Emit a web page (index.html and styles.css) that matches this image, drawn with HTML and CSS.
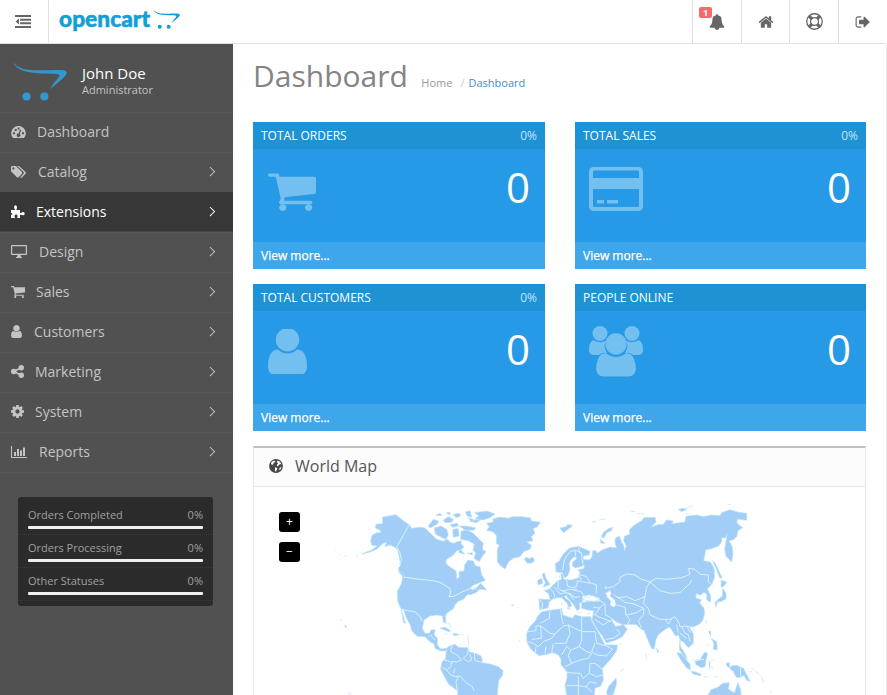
FILE: index.html
```html
<!DOCTYPE html>
<html lang="en">
<head>
<meta charset="utf-8">
<title>Dashboard</title>
<link rel="stylesheet" href="styles.css">
</head>
<body>
<svg class="defs" width="0" height="0" aria-hidden="true">
  <symbol id="cart" viewBox="64 128 1664 1536"><path d="M704 1536q0 52-38 90t-90 38-90-38-38-90 38-90 90-38 90 38 38 90zm896 0q0 52-38 90t-90 38-90-38-38-90 38-90 90-38 90 38 38 90zm128-1088v512q0 24-16.500 42.500t-40.500 21.500l-1044 122q13 60 13 70 0 16-24 64h920q26 0 45 19t19 45-19 45-45 19h-1024q-26 0-45-19t-19-45q0-11 8-31.500t16-36 21.500-40 15.500-29.500l-177-823h-204q-26 0-45-19t-19-45 19-45 45-19h256q16 0 28.500 6.500t19.500 15.500 13 24.500 8 26 5.500 29.500 4.500 26h1201q26 0 45 19t19 45z"/></symbol>
  <symbol id="user" viewBox="256 128 1280 1536"><path d="M1536 1399q0 109-62.500 187t-150.500 78h-854q-88 0-150.500-78t-62.500-187q0-85 8.500-160.500t31.500-152 58.500-131 94-89 134.500-34.500q131 128 313 128t313-128q76 0 134.500 34.500t94 89 58.500 131 31.500 152 8.500 160.500zm-256-887q0 159-112.500 271.500t-271.500 112.500-271.500-112.500-112.500-271.500 112.500-271.500 271.500-112.500 271.500 112.500 112.500 271.500z"/></symbol>
  <symbol id="swoosh" viewBox="0 0 54 39"><path d="M0 0C5 7 13 8 24 8.300C35 8.600 45 7.500 51 8.300C54 9 54.500 11 52.500 13.500C49 18 43 22 37 27C42 19 46 16 46.500 13.500C47 11.500 40 12 30 11.500C13 11 3 8 0 0Z"/><circle cx="13.500" cy="34.500" r="4.100"/><circle cx="31.300" cy="34.500" r="4.100"/></symbol>
</svg>

<header class="topbar">
  <a class="toggle"><svg width="16" height="13" viewBox="0 0 16 13"><path d="M0 0h16v2H0zM5 3.700h11v2H5zM5 7.300h11v2H5zM0 11h16v2H0zM4 3.500v6L.5 6.500z"/></svg></a>
  <a class="brand"><svg width="124" height="36" viewBox="0 -3 124 36"><text x="0" y="19.500" textLength="91" lengthAdjust="spacingAndGlyphs">opencart</text><use href="#swoosh" x="94" y="2.500" width="27" height="19.500"/></svg></a>
  <nav class="tools">
    <a class="alerts"><svg width="16" height="16" viewBox="64 0 1664 1792"><path d="M1728 1408q0 52-38 90t-90 38h-448q0 106-75 181t-181 75-181-75-75-181h-448q-52 0-90-38t-38-90q50-42 91-88t85-119.500 74.500-158.500 50-206 19.500-260q0-152 117-282.500t307-158.500q-8-19-8-39 0-40 28-68t68-28 68 28 28 68q0 20-8 39 190 28 307 158.500t117 282.500q0 139 19.500 260t50 206 74.500 158.500 85 119.500 91 88z"/></svg><span class="badge">1</span></a>
    <a><svg width="16" height="16" viewBox="0 0 1792 1792"><path d="M1472 992v480q0 26-19 45t-45 19h-384v-384h-256v384h-384q-26 0-45-19t-19-45v-480q0-1 .5-3t.5-3l575-474 575 474q1 2 1 6zm223-69l-62 74q-8 9-21 11h-3q-13 0-21-7l-692-577-692 577q-12 8-24 7-13-2-21-11l-62-74q-8-10-7-23.500t11-21.500l719-599q32-26 76-26t76 26l244 204v-195q0-14 9-23t23-9h192q14 0 23 9t9 23v408l219 182q10 8 11 21.500t-7 23.500z"/></svg></a>
    <a><svg class="ring" width="17" height="17" viewBox="0 0 16 16"><circle cx="8" cy="8" r="7.300"/><circle cx="8" cy="8" r="3.700"/><path d="M3 3l2.500 2.500M13 3l-2.500 2.500M3 13l2.500-2.500M13 13l-2.500-2.500"/></svg></a>
    <a><svg width="16" height="16" viewBox="0 0 1792 1792"><path d="M704 1440q0 4 1 20t.5 26.500-3 23.500-10 19.500-20.500 6.500h-320q-119 0-203.500-84.500t-84.500-203.500v-704q0-119 84.500-203.500t203.500-84.500h320q13 0 22.500 9.500t9.500 22.500q0 4 1 20t.5 26.500-3 23.500-10 19.500-20.500 6.500h-320q-66 0-113 47t-47 113v704q0 66 47 113t113 47h312l11.500 1 11.500 3 8 5.500 7 9 2 13.500zm928-544q0 26-19 45l-544 544q-19 19-45 19t-45-19-19-45v-288h-448q-26 0-45-19t-19-45v-384q0-26 19-45t45-19h448v-288q0-26 19-45t45-19 45 19l544 544q19 19 19 45z"/></svg></a>
  </nav>
</header>

<div class="layout">
  <aside class="sidebar">
    <div class="profile">
      <svg width="54" height="39"><use href="#swoosh" width="54" height="39"/></svg>
      <div><h4>John Doe</h4><small>Administrator</small></div>
    </div>
    <ul class="menu">
      <li><svg width="15" height="12" viewBox="0 0 15 12"><path fill-rule="evenodd" d="M2 12A7.300 7.300 0 1 1 13 12ZM2 6.300h2v2H2zM3.700 3h2v2h-2zM6.700 1.600h1.800v1.800H6.700zM11 6.300h2v2h-2zM9 3.500 7.700 7.500A1.800 1.800 0 1 0 8.800 8L10.300 4z"/></svg><span class="g11">Dashboard</span></li>
      <li class="sub"><svg width="15" height="12" viewBox="0 0 15 12"><path fill-rule="evenodd" d="M0 1Q0 0 1 0H5L11 6Q11.700 7 11 7.700L7.700 11.300Q6.800 12 6 11.300L0 5.300ZM2.300 1.300A1.100 1.100 0 1 0 2.400 1.300Z"/><path d="M6.300 0H8L14.500 6Q15.300 7 14.500 7.700L11 11.500Q10.200 12.200 9.300 11.500L12.700 7.600Q13.300 6.700 12.500 6Z"/></svg><span class="g12">Catalog</span></li>
      <li class="sub active"><svg width="14" height="13" viewBox="0 0 14 13"><path d="M0 5H4.200Q2.600 3 3.300 1.300Q4.500-.7 5.800 1.300Q6.400 3 5.200 5H9V8Q10.500 8 11.500 7Q14 6.700 13.700 9.300Q12.700 11 11 10Q10 9.500 9 10V13H6Q7.300 10.500 5.800 9.700Q4.200 9.300 3.600 10.400Q3.200 11.500 4.200 13H0V10L2 9L0 8Z"/></svg><span class="g11">Extensions</span></li>
      <li class="sub"><svg width="16" height="13" viewBox="0 0 16 13"><path fill-rule="evenodd" d="M1 0H15Q16 0 16 1V9Q16 10 15 10H9.500L10 12H11V13H5V12H6L6.500 10H1Q0 10 0 9V1Q0 0 1 0ZM1.200 1.200V8.700H14.800V1.200Z"/></svg><span class="g12">Design</span></li>
      <li class="sub"><svg width="14" height="13"><use href="#cart"/></svg><span class="g11">Sales</span></li>
      <li class="sub"><svg width="11" height="13"><use href="#user"/></svg><span class="g12">Customers</span></li>
      <li class="sub"><svg width="13" height="13" viewBox="0 0 12 12"><path d="M2.500 6 9.500 2.500M2.500 6 9.500 9.500" stroke="currentColor" stroke-width="1.600"/><circle cx="2.500" cy="6" r="2.500"/><circle cx="9.500" cy="2.500" r="2.500"/><circle cx="9.500" cy="9.500" r="2.500"/></svg><span class="g11">Marketing</span></li>
      <li class="sub"><svg width="13" height="13" viewBox="128 128 1536 1536"><path d="M1152 896q0-106-75-181t-181-75-181 75-75 181 75 181 181 75 181-75 75-181zm512-109v222q0 12-8 23t-20 13l-185 28q-19 54-39 91 35 50 107 138 10 12 10 25t-9 23q-27 37-99 108t-94 71q-12 0-26-9l-138-108q-44 23-91 38-16 136-29 186-7 28-36 28h-222q-14 0-24.500-8.500t-11.500-21.500l-28-184q-49-16-90-37l-141 107q-10 9-25 9-14 0-25-11-126-114-165-168-7-10-7-23 0-12 8-23 15-21 51-66.500t54-70.500q-27-50-41-99l-183-27q-13-2-21-12.500t-8-23.500v-222q0-12 8-23t19-13l186-28q14-46 39-92-40-57-107-138-10-12-10-24 0-10 9-23 26-36 98.500-107.500t94.500-71.500q13 0 26 10l138 107q44-23 91-38 16-136 29-186 7-28 36-28h222q14 0 24.500 8.500t11.500 21.500l28 184q49 16 90 37l142-107q9-9 24-9 13 0 25 10 129 119 165 170 7 8 7 22 0 12-8 23-15 21-51 66.500t-54 70.500q26 50 41 98l183 28q13 2 21 12.500t8 23.500z"/></svg><span class="g11">System</span></li>
      <li class="sub"><svg width="16" height="12" viewBox="0 0 16 12"><path d="M0 0h1v11h15v1H0zM3 6h2v4H3zM6 3h2v7H6zM9 4.500h2V10H9zM12 1.500h2V10h-2z"/></svg><span class="g12">Reports</span></li>
    </ul>
    <ul class="stats">
      <li><div><span>Orders Completed</span><span>0%</span></div><i></i></li>
      <li><div><span>Orders Processing</span><span>0%</span></div><i></i></li>
      <li><div><span>Other Statuses</span><span>0%</span></div><i></i></li>
    </ul>
  </aside>

  <main class="content">
    <div class="page-head">
      <h1>Dashboard</h1>
      <ul class="crumbs"><li>Home</li><li class="here">Dashboard</li></ul>
    </div>
    <section class="tiles">
      <article class="tile">
        <header><span>TOTAL ORDERS</span><b>0%</b></header>
        <div class="tile-body"><svg class="big-cart" width="48" height="41" viewBox="64 128 1664 1536" preserveAspectRatio="none"><use href="#cart" x="64" y="128" width="1664" height="1536"/></svg><h2>0</h2></div>
        <footer>View more...</footer>
      </article>
      <article class="tile">
        <header><span>TOTAL SALES</span><b>0%</b></header>
        <div class="tile-body"><svg width="54" height="44" viewBox="0 0 54 44"><path fill-rule="evenodd" d="M5 0H49Q54 0 54 5V39Q54 44 49 44H5Q0 44 0 39V5Q0 0 5 0ZM5 3.500Q4 3.500 4 5V11H50V5Q50 3.500 49 3.500ZM4 22V39Q4 40 5 40H49Q50 40 50 39V22ZM8 33H15V36.500H8ZM18 33H29V36.500H18Z"/></svg><h2>0</h2></div>
        <footer>View more...</footer>
      </article>
      <article class="tile">
        <header><span>TOTAL CUSTOMERS</span><b>0%</b></header>
        <div class="tile-body"><svg width="39" height="45" viewBox="0 0 39 45"><use href="#user" y="-1" width="39" height="47"/></svg><h2>0</h2></div>
        <footer>View more...</footer>
      </article>
      <article class="tile">
        <header><span>PEOPLE ONLINE</span></header>
        <div class="tile-body people"><svg width="54" height="51" viewBox="0 0 54 51"><circle cx="11" cy="7.500" r="7.500"/><circle cx="43" cy="7.500" r="7.500"/><circle cx="27" cy="18" r="10.700"/><path d="M4 14Q11 18 17 14.500Q14 21 18 27Q13 26 10 29H5Q0 29 0 24Q0 16 4 14ZM50 14Q43 18 37 14.500Q40 21 36 27Q41 26 44 29H49Q54 29 54 24Q54 16 50 14ZM17 27Q27 35 37 27Q43 27 45 33Q47 38 47 43Q46 50.500 39 50.500H15Q8 50.500 7 43Q7 38 9 33Q11 27 17 27Z"/></svg><h2>0</h2></div>
        <footer>View more...</footer>
      </article>
    </section>

    <section class="panel">
      <h3><svg width="14" height="14" viewBox="0 0 14 14"><circle cx="7" cy="7" r="6.900"/><path fill="#fcfcfc" d="M2.500 3 4.500 1.700 6.500 2 5.600 3.200 4.500 4.600 3.500 5.200 4.500 6.300 2.800 5.800 2 4.500ZM8.500 1.500 11 2.800 12.500 5.500 11 5 9.800 6.200 8.200 7.400 7.800 5.800 9.300 4.600 7.800 3.400ZM6 8.200 8.500 9.200 7.600 11.200 6.800 12.700 5.900 11.500ZM10.800 8.500 12.500 8 11 11.200 10.200 10.600Z"/></svg><span>World Map</span></h3>
      <div class="map">
        <svg width="611" height="208" viewBox="254 487 611 208">
          <g transform="translate(330 500) scale(.33333)">
            <g class="land">
              <path d="M157 52 170 49 198 44 220 62 238 74 245 85 270 82 285 84 293 92 310 108 318 117 340 124 352 118 360 127 372 130 380 125 395 123 393 132 402 140 395 148 380 152 370 165 350 178 347 188 355 197 378 213 381 238 388 232 387 215 402 213 404 195 414 180 430 183 436 197 450 200 455 225 466 241 448 248 430 256 420 265 428 270 440 262 448 268 440 277 422 284 412 284 400 298 385 304 375 314 370 326 350 340 346 350 348 370 340 366 338 348 320 345 300 348 282 360 277 385 285 400 298 400 303 390 316 389 312 404 322 415 322 435 332 447 348 445 352 452 332 453 315 445 312 432 300 425 285 410 262 409 246 394 241 375 228 352 222 332 212 325 203 302 202 274 215 250 218 228 207 217 206 203 212 196 208 170 203 150 195 142 180 135 165 140 170 126 158 131 140 148 120 156 95 162 125 150 142 138 126 136 122 124 126 106 140 98 152 98 150 90 136 84 138 73 158 71Z"/>
              <path d="M213 327 227 370 221 368ZM206 210 225 228 222 235ZM436 268 452 250 470 270 452 268Z"/>
              <path d="M295 78 310 58 325 63 322 72 300 84ZM312 84 332 78 350 88 355 105 347 118 325 107 317 103ZM318 46 330 40 337 47ZM348 38 360 37 360 45ZM340 60 355 50 370 58 365 67 345 68ZM370 43 388 40 392 48 378 53ZM368 88 385 86 387 108 370 112ZM393 94 410 89 430 100 446 116 460 130 457 148 468 155 455 172 448 185 432 175 437 158 429 151 433 132 415 122 392 118ZM385 157 392 148 404 163ZM406 36 420 32 425 52 412 48ZM388 78 413 79 438 84 430 91 405 90ZM433 38 470 33 495 42 482 52 460 60 435 58 447 47ZM420 64 440 59 450 62 438 68ZM412 160 427 158 427 165ZM360 74 383 70 385 78 368 82ZM415 53 432 59 425 67Z"/>
              <path d="M470 70 490 66 488 57 510 51 535 55 548 50 575 50 600 53 605 63 632 67 622 80 609 86 615 100 604 110 609 122 590 126 604 136 600 148 582 154 570 170 550 175 536 185 525 207 512 198 502 185 502 148 508 136 499 130 500 108 490 96 470 91 478 80Z"/>
              <path d="M583 178 588 172 598 176 608 172 614 180 608 188 592 190ZM330 384 345 382 362 392 358 396ZM370 400 386 402 385 406 370 406ZM346 366 352 374M356 368 362 382M345 400 352 402M45 376 50 380 46 384ZM30 361 35 362M15 149 18 150M28 164 32 165M40 168 52 169M78 166 84 165M115 82 121 90M545 316 553 316M563 322 567 325M592 366 597 366M565 418 570 425M52 578 64 584M414 405 416 435M392 404 400 405"/>
              <path d="M350 445 358 438 375 433 385 442 415 443 418 456 435 460 452 467 457 478 455 488 480 492 505 500 519 512 518 525 506 542 503 570 500 620 385 620 383 573 355 551 332 508 336 485 346 478Z"/>
            </g>
            <path class="line" d="M238 74 200 141 210 158 214 180 208 195M222 231 260 237 310 242 330 247 345 256 360 266 362 280 357 290 372 289 390 279 415 268 422 262 438 265M212 327 232 332 255 335 270 350 277 364M295 412 302 405 315 420M366 437 362 455 380 464 395 480 380 486 365 485 362 500 350 510 338 503M415 443 413 462 400 475 415 485 425 480 420 463M433 460 435 482 452 486M350 510 362 525 378 530 390 528 408 548 425 558 433 573M385 530 378 545 382 572M345 480 362 486M375 505 370 520"/>
          </g>
          <g transform="translate(500 500) scale(.33333)">
            <g class="land">
              <path d="M117 297 150 299 146 281 133 272 148 267 165 250 176 241 185 238 182 222 188 222 191 238 215 240 237 233 240 215 233 210 250 206 254 198 247 192 249 178 268 180 276 170 278 152 288 152 291 160 308 149 330 141 350 144 345 128 346 115 358 108 364 125 372 138 373 152 379 138 371 122 374 108 390 103 388 90 402 76 425 62 432 53 466 52 468 67 452 82 474 74 490 73 500 60 520 63 515 71 555 66 558 49 590 45 610 50 635 45 660 47 665 38 690 29 715 37 740 40 740 61 712 57 711 70 728 83 714 92 710 110 700 119 687 122 697 142 699 163 695 186 678 169 674 148 677 131 681 101 676 114 664 113 666 124 657 137 640 144 617 150 611 182 630 186 637 195 643 210 643 234 635 254 622 267 632 288 632 306 621 301 620 282 612 277 602 286 589 281 587 294 604 299 599 309 612 325 614 340 609 359 600 371 582 380 568 381 580 402 580 430 565 443 551 427 540 420 541 439 556 463 562 479 550 468 538 448 540 420 536 405 526 408 516 391 508 380 493 390 475 404 467 421 463 447 455 446 440 411 432 391 423 388 410 374 382 373 368 374 350 366 330 352 346 379 362 377 367 371 382 387 367 410 346 421 319 429 306 407 291 386 276 359 282 332 263 330 245 325 245 309 262 304 300 304 298 294 270 285 247 288 248 306 238 309 240 325 232 333 220 313 204 294 198 286 192 290 211 305 215 317 207 323 202 311 185 293 172 293 157 297 147 307 144 324 119 329Z"/>
              <path d="M166 190 176 185 190 162 208 145 235 139 270 154 268 165 250 168 249 198 226 204 217 197 218 186 230 176 222 170 212 180 207 192 210 208 203 228 193 234 188 218 168 216Z"/>
              <path d="M125 335 150 331 185 326 189 345 218 355 224 344 248 350 272 350 275 363 299 405 315 435 352 435 350 452 330 480 307 505 310 540 302 558 285 565 280 615 205 615 195 555 201 535 201 515 183 494 183 478 176 465 158 458 140 463 118 467 96 451 81 428 80 403 88 382 106 363 112 350Z"/>
              <path d="M348 535 350 550 340 583 325 590 319 577 327 558ZM126 224 133 218 138 235 150 253 130 262 136 248ZM113 241 125 235 128 250 114 255ZM180 84 200 80 203 73 218 77 205 87 190 98ZM300 118 315 130 303 130ZM304 112 309 98 325 86 338 82 334 92 320 98 312 113ZM275 66 288 64M297 60 318 57M391 34 405 35M410 40 432 42M535 28 550 25 560 28 545 35ZM558 24 578 18M556 42 564 42M682 13 692 14M470 445 477 455 472 458ZM176 225 180 234M200 323 210 329 208 325ZM183 308 187 318M233 338 245 338M262 342 272 338M33 316 40 316M358 432 364 430M438 462 440 478M360 515 373 505"/>
              <path d="M637 181 646 190 655 210 666 233 660 235 650 210ZM664 240 680 246 672 258 663 262ZM668 265 678 280 678 296 665 304 652 306 648 322 645 308 656 296 667 289ZM617 360 621 372M579 388 585 394M625 394 632 394 632 410M633 415 650 425 652 450 640 448 642 430M620 440 628 432M530 458 542 460 570 493 571 509 560 504 545 483ZM572 514 588 516 605 524 600 527 580 522ZM585 483 600 479 614 456 623 460 618 480 615 500 605 503 588 494ZM626 485 630 484 628 510M633 498 640 508M633 481 640 481M610 529 625 532M640 531 654 530M678 490 688 488 690 503 680 498ZM693 498 710 496 730 505 738 520 750 544 740 541 732 526 720 533 708 531 700 514 690 507ZM747 516 756 515M755 505 762 510M765 513 778 523M784 530 792 548M810 572 815 578M612 600 629 578 632 570 655 561 668 550 688 548 685 567 703 579 714 548 722 570 725 600Z"/>
            </g>
            <path class="sea" d="M250 300 254 290 266 293 280 287 286 293 298 299 280 304ZM317 280 330 271 334 280 330 288 345 300 347 315 342 322 330 316 332 303 322 292Z"/>
            <path class="line" d="M188 210 193 180 208 157 225 150 244 158 248 190M225 150 228 175M235 142 240 160M232 222 260 230 270 248 290 255 288 280M200 240 202 258 218 263 230 260 232 242M175 244 174 265 188 274 205 268 230 268M162 260 180 282 197 278 215 282M205 280 225 292 240 290M185 270 210 284 222 300M220 270 245 276 250 286M232 242 270 250M235 225 245 240M148 265 160 276 165 292M118 300 128 308 125 328M300 302 315 312 316 345 330 352M280 322 300 324 310 312M300 324 284 345 300 352 335 365M284 358 310 375 330 362M318 418 340 415 360 400 350 387M330 300 350 315 375 322 378 345 390 360 382 373M318 258 315 265 340 260 360 245 360 232 380 222 405 225 425 238 450 246 440 262 435 290 405 302 380 290 355 293 340 283M350 290 375 307 402 312M450 246 468 235 500 238 545 233 570 223 565 205 585 208 600 223 625 225 625 245 640 260M450 246 480 272 510 280 540 278 570 250 575 240M435 290 430 310 445 325 450 345 480 358 510 358 525 350 535 365 540 380 560 378 580 385M402 312 432 325 430 345 415 362 425 385M380 345 410 338 430 325M495 358 505 372 515 358M530 375 535 400M545 380 555 400 565 403 570 425M560 378 572 398M540 400 560 415M575 480 595 480 612 478M722 500V532"/>
            <path class="line" d="M150 333 148 355 120 370M182 326 185 355 190 372M85 395 108 392 108 378 122 378 150 400 165 402 190 378 205 375 245 395V350M122 378 124 415 95 418M80 425 100 430 115 440 130 425 155 415 165 402M205 375 210 400 198 430 165 430M245 395 245 420 238 440 212 450 200 440 185 465M245 395H285M285 395 290 430 320 438 338 448 318 468 290 465 275 455 285 430M238 440 260 455 275 460M105 462 108 440M135 460 138 440M155 458 160 432M212 450 205 468 215 490 195 500M215 490 240 480 265 475 275 460M270 490 268 520 250 535 240 520 200 518M270 490H285L310 510M268 520 290 530 308 525M200 557H235V530M235 557 258 560 270 545 290 550M235 557V590M258 560 275 575"/>
          </g>
        </svg>
        <div class="zoom"><button>+</button><button>−</button></div>
      </div>
    </section>
  </main>
</div>
</body>
</html>
```

FILE: styles.css
```css
* { box-sizing: border-box; }
body { margin: 0; height: 695px; overflow: hidden; background: #fff; color: #666; font: 12px/16px "Open Sans", sans-serif; }
ul, h1, h2, h3, h4 { margin: 0; padding: 0; font-weight: 400; list-style: none; }
svg { display: block; flex: none; fill: currentColor; }
.defs { position: absolute; }

.topbar { display: flex; width: 886px; height: 44px; border-bottom: 1px solid #e1e1e1; color: #666; }
.toggle { display: flex; justify-content: center; width: 49px; padding: 15px 2px 0 0; border-right: 1px solid #e1e1e1; }
.brand { padding: 4px 0 0 10px; color: #119fd8; }
.brand svg { overflow: visible; }
.brand text { font: 900 23px "Lato", sans-serif; stroke: currentColor; stroke-width: .5; }
.tools { display: flex; margin-left: auto; }
.tools a { display: flex; position: relative; align-items: center; justify-content: center; width: 48.500px; padding-left: 1px; border-left: 1px solid #e1e1e1; }
.badge { position: absolute; top: 7px; left: 6px; width: 13px; height: 11px; border-radius: 2px; background: #f56b6b; color: #fff; font-size: 9px; font-weight: 700; line-height: 11px; text-align: center; }
.ring { fill: none; stroke: currentColor; stroke-width: 1.200; }
.ring path { stroke-width: 3; }

.layout { display: flex; width: 887px; height: 651px; border-right: 1px solid #eee; }
.sidebar { width: 233px; flex: none; background: #515151; color: #c4c4c4; }
.profile { display: flex; height: 68px; padding: 18px 0 0 13px; gap: 15px; }
.profile > svg { color: #3297cf; }
.profile h4 { margin-top: 3px; color: #fff; font-size: 15px; line-height: 17px; }
.profile small { display: block; font-size: 11px; line-height: 16px; }
.menu { border-bottom: 1px solid #585858; }
.menu li { display: flex; align-items: center; height: 40px; padding: 0 20px 2px 10px; border-top: 1px solid #585858; font-size: 14px; }
.menu li > svg { margin-left: 1px; }
.menu .active { border-color: #373737; background: #373737; color: #fff; box-shadow: inset 0 -1px #454545; }
.g11 { margin-left: 11px; }
.g12 { margin-left: 12px; }
.sub::after { content: ""; width: 5.500px; height: 5.500px; margin-left: auto; border: solid currentColor; border-width: 1.500px 1.500px 0 0; transform: rotate(45deg); }

.stats { width: 195px; height: 109px; margin: 24px 0 0 18px; padding-top: 5px; border-radius: 3px; background: #2b2b2b; color: #a0a0a0; font-size: 11px; }
.stats li { height: 33px; padding: 5px 10px 0; border-bottom: 1px dotted #3a3a3a; }
.stats div { display: flex; justify-content: space-between; }
.stats i { display: block; height: 3px; margin-top: 3px; border-radius: 1px; background: #f0f0f0; }

.content { flex: 1; padding: 0 20px; }
.page-head { display: flex; align-items: baseline; height: 78px; padding-top: 11px; }
.page-head h1 { color: #848484; font-size: 30px; line-height: 42px; }
.crumbs { display: flex; margin-left: 13.500px; color: #999; font-size: 11px; }
.here { color: #428bca; }
.here::before { content: "/"; padding: 0 4px 0 8px; color: #ccc; }

.tiles { display: grid; grid-template-columns: 292px 291px; gap: 15px 30px; }
.tile { height: 147px; background: #269ae6; color: #fff; }
.tile header { display: flex; justify-content: space-between; height: 27px; padding: 6px 8px 5px; background: #1e92d3; }
.tile b { color: #c0e2fa; font-weight: 400; }
.tile-body { display: flex; justify-content: space-between; height: 93px; padding: 18px 15px 0 15px; }
.tile-body svg { color: #72bff0; }
.tile-body .big-cart { margin-top: 3px; }
.tile-body.people svg { margin-top: -3px; }
.tile-body h2 { font-size: 42px; line-height: 40px; }
.tile footer { height: 27px; padding: 6px 8px; background: #3ea7eb; -webkit-text-stroke: .25px #fff; }
.tile:nth-child(even) .tile-body { padding-left: 14px; }

.panel { width: 613px; height: 260px; margin-top: 15px; border: 1px solid #e8e8e8; border-top: 2px solid #bfbfbf; }
.panel h3 { display: flex; align-items: center; height: 39px; padding: 0 0 2px 15px; gap: 12px; border-bottom: 1px solid #e8e8e8; background: #fcfcfc; color: #555; font-size: 16px; }
.panel h3 svg { color: #484848; }
.map { position: relative; }
.land { fill: #a2cdf6; stroke: #b7e3fa; stroke-width: 2; }
.sea { fill: #fff; stroke: #b7e3fa; stroke-width: 2; }
.line { fill: none; stroke: #d9f3ff; stroke-width: 3; }
.zoom { position: absolute; top: 25px; left: 25px; display: grid; gap: 10px; }
.zoom button { width: 21px; height: 20px; padding: 0; border: 0; border-radius: 3px; background: #000; color: #fff; font: 12px/18px "Open Sans", sans-serif; }
```
